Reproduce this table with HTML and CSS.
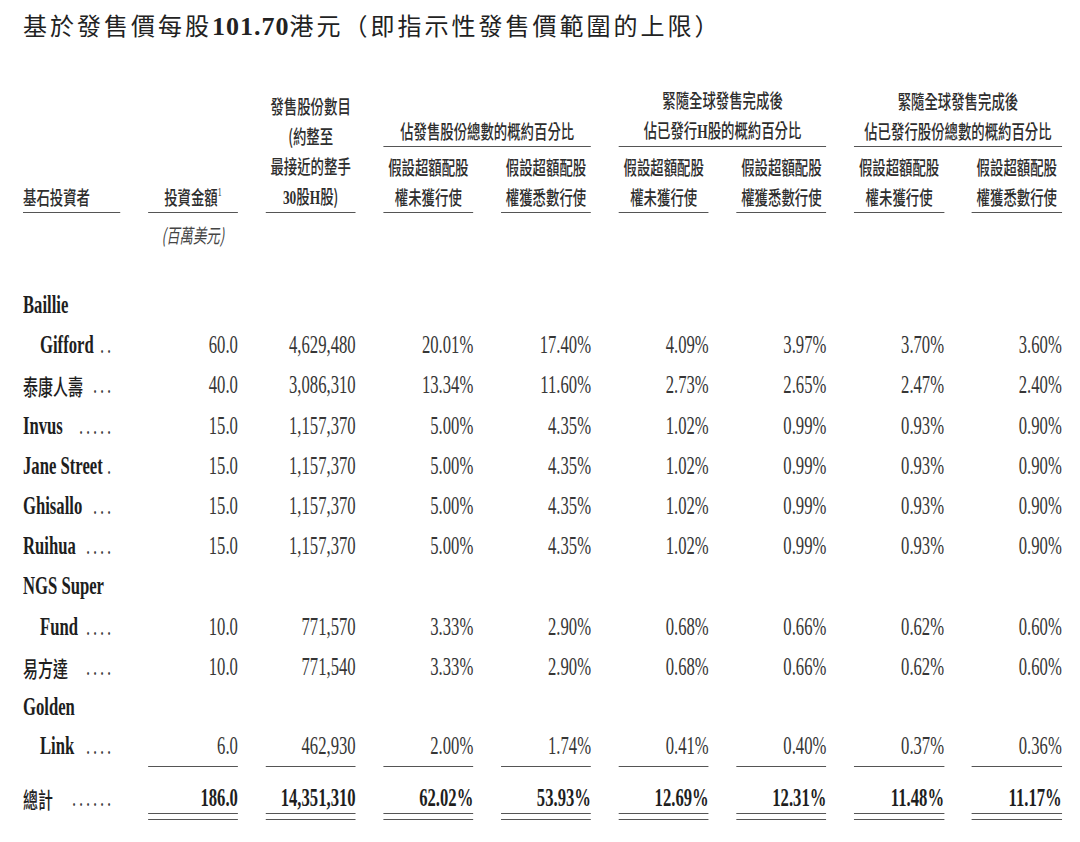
FILE: index.html
```html
<!DOCTYPE html>
<html lang="zh-Hant">
<head>
<meta charset="utf-8">
<title>基石投資者</title>
<link rel="stylesheet" href="styles.css">
</head>
<body>
<div class="page">
  <h1 class="title">基於發售價每股<span class="tnum">101.70</span>港元（即指示性發售價範圍的上限）</h1>
  <div class="table">
    <div class="head">
      <div class="hc c1">基石投資者</div>
      <div class="hc c2">投資金額<sup class="sup">1</sup></div>
      <div class="hc c3">發售股份數目<br>(約整至<br>最接近的整手<br><span class="lat">30</span>股<span class="lat">H</span>股)</div>
      <div class="grp g1">佔發售股份總數的概約百分比</div>
      <div class="grp g2">緊隨全球發售完成後<br>佔已發行<span class="lat">H</span>股的概約百分比</div>
      <div class="grp g3">緊隨全球發售完成後<br>佔已發行股份總數的概約百分比</div>
      <div class="sub s4">假設超額配股<br>權未獲行使</div>
      <div class="sub s5">假設超額配股<br>權獲悉數行使</div>
      <div class="sub s6">假設超額配股<br>權未獲行使</div>
      <div class="sub s7">假設超額配股<br>權獲悉數行使</div>
      <div class="sub s8">假設超額配股<br>權未獲行使</div>
      <div class="sub s9">假設超額配股<br>權獲悉數行使</div>
    </div>
    <div class="units">
      <div class="u2">(百萬美元)</div>
    </div>
    <div class="body">
      <div class="row"><div class="name">Baillie</div></div>
      <div class="row">
        <div class="name ind">Gifford<span class="dots">..</span></div>
        <div class="n">60.0</div><div class="n">4,629,480</div><div class="n">20.01%</div><div class="n">17.40%</div><div class="n">4.09%</div><div class="n">3.97%</div><div class="n">3.70%</div><div class="n">3.60%</div>
      </div>
      <div class="row">
        <div class="name"><span class="cj">泰康人壽</span><span class="dots">...</span></div>
        <div class="n">40.0</div><div class="n">3,086,310</div><div class="n">13.34%</div><div class="n">11.60%</div><div class="n">2.73%</div><div class="n">2.65%</div><div class="n">2.47%</div><div class="n">2.40%</div>
      </div>
      <div class="row">
        <div class="name">Invus<span class="dots">.....</span></div>
        <div class="n">15.0</div><div class="n">1,157,370</div><div class="n">5.00%</div><div class="n">4.35%</div><div class="n">1.02%</div><div class="n">0.99%</div><div class="n">0.93%</div><div class="n">0.90%</div>
      </div>
      <div class="row">
        <div class="name">Jane Street<span class="dots">.</span></div>
        <div class="n">15.0</div><div class="n">1,157,370</div><div class="n">5.00%</div><div class="n">4.35%</div><div class="n">1.02%</div><div class="n">0.99%</div><div class="n">0.93%</div><div class="n">0.90%</div>
      </div>
      <div class="row">
        <div class="name">Ghisallo<span class="dots">...</span></div>
        <div class="n">15.0</div><div class="n">1,157,370</div><div class="n">5.00%</div><div class="n">4.35%</div><div class="n">1.02%</div><div class="n">0.99%</div><div class="n">0.93%</div><div class="n">0.90%</div>
      </div>
      <div class="row">
        <div class="name">Ruihua<span class="dots">....</span></div>
        <div class="n">15.0</div><div class="n">1,157,370</div><div class="n">5.00%</div><div class="n">4.35%</div><div class="n">1.02%</div><div class="n">0.99%</div><div class="n">0.93%</div><div class="n">0.90%</div>
      </div>
      <div class="row"><div class="name">NGS Super</div></div>
      <div class="row">
        <div class="name ind">Fund<span class="dots">....</span></div>
        <div class="n">10.0</div><div class="n">771,570</div><div class="n">3.33%</div><div class="n">2.90%</div><div class="n">0.68%</div><div class="n">0.66%</div><div class="n">0.62%</div><div class="n">0.60%</div>
      </div>
      <div class="row">
        <div class="name"><span class="cj">易方達</span><span class="dots">....</span></div>
        <div class="n">10.0</div><div class="n">771,540</div><div class="n">3.33%</div><div class="n">2.90%</div><div class="n">0.68%</div><div class="n">0.66%</div><div class="n">0.62%</div><div class="n">0.60%</div>
      </div>
      <div class="row"><div class="name">Golden</div></div>
      <div class="row last">
        <div class="name ind">Link<span class="dots">....</span></div>
        <div class="n">6.0</div><div class="n">462,930</div><div class="n">2.00%</div><div class="n">1.74%</div><div class="n">0.41%</div><div class="n">0.40%</div><div class="n">0.37%</div><div class="n">0.36%</div>
      </div>
      <div class="row total">
        <div class="name"><span class="cj">總計</span><span class="dots">......</span></div>
        <div class="n">186.0</div><div class="n">14,351,310</div><div class="n">62.02%</div><div class="n">53.93%</div><div class="n">12.69%</div><div class="n">12.31%</div><div class="n">11.48%</div><div class="n">11.17%</div>
      </div>
    </div>
  </div>
</div>
</body>
</html>
```

FILE: styles.css
```css
html, body {
  margin: 0;
  padding: 0;
  background: #ffffff;
  overflow: hidden;
}

.page {
  width: 1080px;
  height: 842px;
  padding-left: 23px;
  box-sizing: border-box;
  overflow: hidden;
  color: #2b2b2b;
}

.title {
  margin: 8px 0 0 0;
  height: 34px;
  line-height: 34px;
  font-family: "Noto Sans CJK TC", "Noto Sans CJK SC", sans-serif;
  font-size: 24px;
  font-weight: 400;
  letter-spacing: 3px;
  color: #222;
  white-space: nowrap;
}

.tnum {
  font-family: "Liberation Serif", serif;
  font-weight: 700;
  font-size: 26px;
  letter-spacing: 1px;
}

/* the whole table is set in a condensed face: laid out wide, then squeezed */
.table {
  width: 1528px;
  margin-top: 43px;
  transform: scaleX(0.68);
  transform-origin: 0 0;
}

.head,
.units,
.row {
  display: grid;
  grid-template-columns: 143px repeat(8, 132.4px);
  column-gap: 40.7px;
}

.head {
  grid-template-rows: auto auto;
  font-family: "Noto Sans CJK TC", "Noto Sans CJK SC", sans-serif;
  font-size: 19.7px;
  font-weight: 500;
  line-height: 30px;
  color: #2e2e2e;
  text-align: center;
}

.lat {
  font-family: "Liberation Serif", serif;
  font-weight: 700;
}

.hc {
  grid-row: 1 / 3;
  align-self: end;
  border-bottom: 1.5px solid #555;
}

.c1 { grid-column: 1; text-align: left; }
.c2 { grid-column: 2; }
.c3 { grid-column: 3; }

.sup {
  font-family: "Liberation Serif", serif;
  font-size: 11.5px;
  line-height: 0;
  vertical-align: 9px;
}

.grp {
  grid-row: 1;
  align-self: end;
  border-bottom: 1.5px solid #555;
}

.g1 { grid-column: 4 / 6; }
.g2 { grid-column: 6 / 8; }
.g3 { grid-column: 8 / 10; }

.sub {
  grid-row: 2;
  padding-top: 5px;
  border-bottom: 1.5px solid #555;
}

.s4 { grid-column: 4; }
.s5 { grid-column: 5; }
.s6 { grid-column: 6; }
.s7 { grid-column: 7; }
.s8 { grid-column: 8; }
.s9 { grid-column: 9; }

.units {
  margin-top: 9px;
  height: 26px;
  line-height: 26px;
  font-family: "Noto Sans CJK TC", "Noto Sans CJK SC", sans-serif;
  font-size: 19.7px;
  font-style: italic;
  color: #444;
}

.u2 {
  grid-column: 2;
  text-align: center;
}

.body {
  margin-top: 37px;
  font-family: "Liberation Serif", "Noto Sans CJK TC", serif;
  font-size: 24.5px;
  color: #363636;
}

.row {
  height: 40.2px;
  line-height: 40.2px;
}

.name {
  grid-column: 1;
  display: flex;
  padding-right: 9px;
  font-weight: 700;
  color: #1e1e1e;
  white-space: nowrap;
}

.ind {
  padding-left: 25px;
}

.cj {
  font-family: "Noto Sans CJK TC", "Noto Sans CJK SC", sans-serif;
  font-size: 22px;
  font-weight: 500;
}

.dots {
  margin-left: auto;
  letter-spacing: 4.2px;
  font-weight: 400;
  color: #444;
}

.n {
  text-align: right;
}

.row.last {
  height: 39.5px;
  line-height: 38px;
}

.row.last .n {
  border-bottom: 1.5px solid #555;
}

.row.total {
  margin-top: 16px;
  height: auto;
  line-height: 30.5px;
}

.row.total .n {
  font-weight: 700;
  color: #1e1e1e;
  border-bottom: 1.5px solid #555;
}

.row.total .n::after {
  content: "";
  display: block;
  height: 4.5px;
  border-top: 1.5px solid #555;
}
```
